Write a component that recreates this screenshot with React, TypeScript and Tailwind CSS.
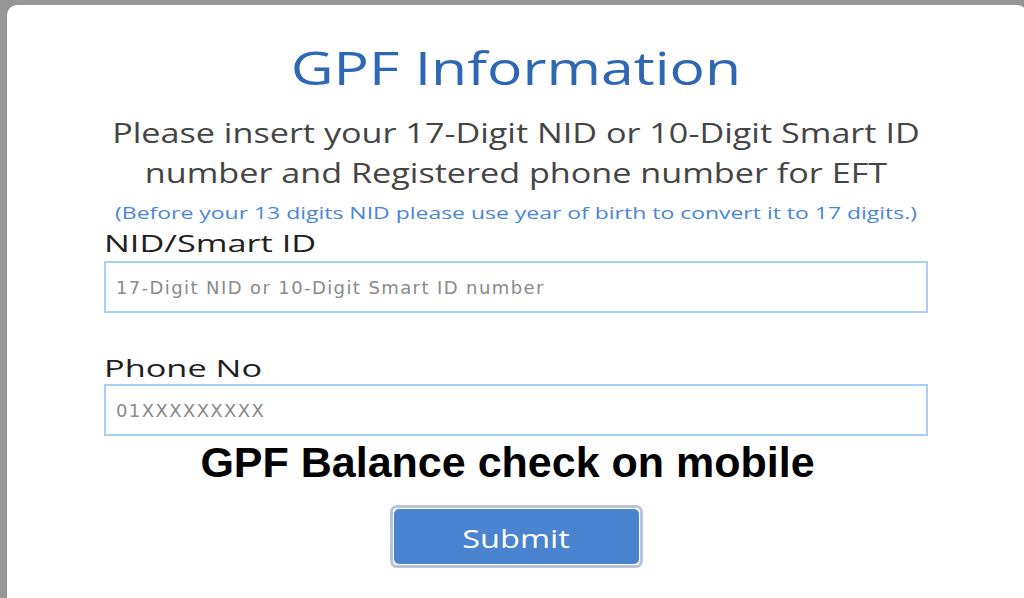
import React from "react";

const ui = { fontFamily: '"Open Sans", "Noto Sans", sans-serif' };
const field = { fontFamily: '"DejaVu Sans", "Open Sans", sans-serif' };

export default function App() {
  return (
    <div className="w-[1024px] h-[598px] overflow-hidden bg-[#969696]">
      <div
        className="ml-[7px] mt-[5px] w-[1020px] h-[600px] bg-white rounded-t-[10px] flex flex-col items-start"
        style={ui}
      >
        <h1 className="w-[1018px] mt-[34px] text-center text-[46px] leading-[56px] font-medium text-[#2e68b4]">
          <span className="inline-block scale-x-[1.28]">GPF Information</span>
        </h1>
        <p className="w-[1018px] mt-[17px] text-center text-[28px] leading-[40px] text-[#454545]">
          <span className="inline-block scale-x-[1.22]">
            Please insert your 17-Digit NID or 10-Digit Smart ID
            <br />
            number and Registered phone number for EFT
          </span>
        </p>
        <p className="w-[1018px] mt-[11px] text-center text-[17px] leading-[20px] text-[#4a86d8]">
          <span className="inline-block scale-x-[1.35]">
            (Before your 13 digits NID please use year of birth to convert it to 17 digits.)
          </span>
        </p>
        <label className="ml-[97px] mt-[6px] text-[24px] leading-[28px] text-[#1f1f1f] origin-left scale-x-[1.43]">
          NID/Smart ID
        </label>
        <input
          className="ml-[97px] mt-[4px] w-[824px] h-[52px] border-2 border-[#a6d0f7] px-[10px] text-[18px] tracking-[1.4px] text-[#333] placeholder:text-[#8a8a8a] outline-none"
          style={field}
          placeholder="17-Digit NID or 10-Digit Smart ID number"
        />
        <label className="ml-[97px] mt-[41px] text-[24px] leading-[28px] text-[#1f1f1f] origin-left scale-x-[1.43]">
          Phone No
        </label>
        <input
          className="ml-[97px] mt-[2px] w-[824px] h-[52px] border-2 border-[#a6d0f7] px-[10px] text-[18px] tracking-[1.4px] text-[#333] placeholder:text-[#8a8a8a] outline-none"
          style={field}
          placeholder="01XXXXXXXXX"
        />
        <h2
          className="w-[1001px] mt-[4px] text-center text-[43px] leading-[44px] font-bold text-black"
          style={{ fontFamily: '"Liberation Sans", Arial, sans-serif' }}
        >
          GPF Balance check on mobile
        </h2>
        <div className="w-[1018px] mt-[21px] flex justify-center">
          <div className="rounded-[7px] border-[3px] border-[#b8c5d8] p-[1px]">
            <button className="w-[245px] h-[55px] rounded-[5px] bg-[#4a83cf] text-white text-[26px]">
              <span className="inline-block scale-x-[1.25] translate-y-[2px]">Submit</span>
            </button>
          </div>
        </div>
      </div>
    </div>
  );
}
